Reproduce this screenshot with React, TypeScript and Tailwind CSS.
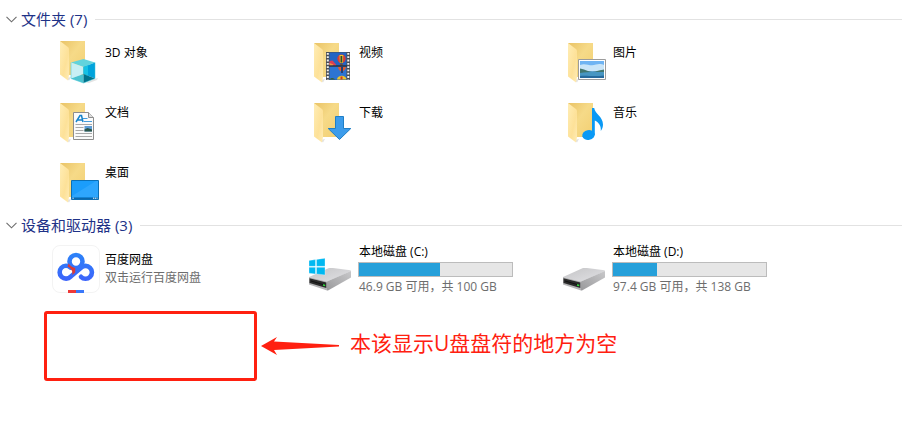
import { ReactNode, useState } from "react";

interface IFolder {
    name: string;
    icon: ReactNode;
    top?: number;
}

interface IDrive {
    name: string;
    usage: string;
    used: number;
    system?: boolean;
}

// -----ICONS-----
const FolderIcon = ({ top = 5, children }: { top?: number; children: ReactNode }) => (
    <svg viewBox="0 0 48 48" className="size-12 shrink-0" aria-hidden="true">
        <defs>
            <linearGradient id="folderBack" x1="0" y1="0" x2="1" y2="1">
                <stop offset="0" stopColor="#e9c366" />
                <stop offset="0.45" stopColor="#f6da88" />
                <stop offset="1" stopColor="#f2cf72" />
            </linearGradient>
            <linearGradient id="folderFlap" x1="0" y1="0" x2="1" y2="1">
                <stop offset="0" stopColor="#ffedb5" />
                <stop offset="0.6" stopColor="#fde198" />
                <stop offset="1" stopColor="#ffecb6" />
            </linearGradient>
        </defs>
        <g transform={`translate(0 ${top - 5})`}>
            <path d="M14 42l5-1-2 3.500z" fill="#e3e3e3" />
            <path d="M8 5h25v34H16z" fill="url(#folderBack)" />
            <path d="M8 5l8.200 6.200 .8 1.300V39l-1 5.600L8 38.500z" fill="url(#folderFlap)" />
        </g>
        {children}
    </svg>
);

const Objects3D = () => (
    <g>
        <path d="M34 45l8-4 4-1-1 2-8 3z" fill="#e4e4e4" />
        <path d="M19 24.500l12.500-3.500L43 24.500 31.500 29z" fill="#62d3dd" />
        <path d="M19 24.500L31.500 29v7L19 40.500z" fill="#c8eff4" />
        <path d="M43 24.500L31.500 29v7L43 40.500z" fill="#00a3dc" />
        <path d="M31.500 29l4.500-1.800v10.500L31.500 36z" fill="#16c1e4" />
        <path d="M19 40.500L31.500 36v9z" fill="#4cc3d0" />
        <path d="M43 40.500L31.500 36v9z" fill="#00738c" />
        <path d="M19 24.500v16L31.500 45 43 40.500v-16" fill="none" stroke="#3fc2d5" strokeWidth=".5" />
    </g>
);

const Videos = () => (
    <g>
        <path d="M20 14h24v28H20z" fill="#4b4f55" />
        <path d="M23.500 14.500h17v13h-17z" fill="#2464c4" />
        <path d="M23.500 28.500h17v13.200h-17z" fill="#2d74d2" />
        <path d="M21.800 15v27M42.300 15v27" stroke="#f2f2f2" strokeWidth="2" strokeDasharray="1.800 1.500" />
        <circle cx="35.500" cy="20.800" r="4.200" fill="#d93a36" />
        <path d="M33.500 17h3.800l-.4 8h-3z" fill="#f3c42f" />
        <path d="M34.500 18h1.800v6.500h-1.800z" fill="#284c3b" />
        <path d="M34.200 25.500h2.500v2h-2.500z" fill="#77462b" />
        <path d="M23.500 23l3-.5 3.500 4v1h-6.500z" fill="#dc3e54" />
        <path d="M23.500 25l4 1.500-1 1h-3z" fill="#ed9644" />
        <path d="M32 29h8c-.5 3-2 3.500-4 5-2-1.200-3.500-2-4-5z" fill="#e15a2e" />
        <path d="M35 29h2v6h-2z" fill="#233e72" />
        <path d="M31 41.500c.5-5 9-5 9.500 0z" fill="#eec529" />
        <path d="M34.500 38.500h2v3h-2z" fill="#c83834" />
        <path d="M23.500 41.500c1.500-2 4-2 5.500 0z" fill="#35603b" />
        <path d="M23 28h18" stroke="#1d2733" />
    </g>
);

const Pictures = () => (
    <g>
        <path d="M18.500 21.500h27v20h-27z" fill="#fff" stroke="#9c9c9c" />
        <path d="M20 23h24v17H20z" fill="#6fb4f3" />
        <path d="M20 27c6-2.500 10 2 16-.5 3-1 6-.5 8 .5v6H20z" fill="#c9e5f8" />
        <path d="M20 30.500c3 .3 5 1.700 8 2.500 4 1.200 7 .5 10-.3 3-.7 4.500-1 6-1.200v4H20z" fill="#41766f" />
        <path d="M20 35c8-1.500 16-1 24-1v6H20z" fill="#4796c2" />
        <path d="M20 38c6-1 14 1 24-.5V40H20z" fill="#276a9d" />
    </g>
);

const Documents = () => (
    <g>
        <path d="M21.500 14.500h15l5 5v22h-20z" fill="#fafafa" stroke="#8d8d8d" />
        <path d="M36.500 14.500v5h5" fill="#dedede" stroke="#8d8d8d" />
        <path d="M24 24l4-6.500h1.500L31 24M25.500 22h4.500" fill="none" stroke="#1583cb" strokeWidth="1.500" />
        <path d="M31 20.500h4.500M32 23.500h8" stroke="#459cda" />
        <path d="M23.500 26.500h16.500M23.500 29.500h8M23.500 32.500h8M23.500 35.500h16.500M23.500 38.500h16.500" stroke="#a9a9a9" />
        <path d="M32.500 28h7.500v5.500h-7.500z" fill="#5d9cd4" />
        <path d="M32.500 31.500l3-1.500 4.500 1.500v2h-7.500z" fill="#2c5548" />
    </g>
);

const Downloads = () => <path d="M29.500 18.500h8V30.500h7.300L33.500 41.500 22.200 30.500h7.300z" fill="#3c9ceb" stroke="#1f7fc6" />;

const Music = () => (
    <g fill="#0a99f5">
        <ellipse cx="28.500" cy="37" rx="6.300" ry="4.900" transform="rotate(-12 28.500 37)" />
        <path d="M32 10h2.200c.7 6 8.800 8.500 8.800 16.500 0 2.500-.8 4.500-2.200 6.500.5-5-1.800-8.500-6-10.500V37H32z" />
    </g>
);

const Desktop = () => (
    <g>
        <path d="M19.500 22.500h27v19h-27z" fill="#1b9dfb" stroke="#0b6fb5" />
        <path d="M20 38L44 23h2v16H20z" fill="#41b0ff" opacity=".5" />
        <path d="M20 39.500h26V41H20z" fill="#0a68ad" />
        <path d="M20.500 40.200h1.500M41 40.200h4.500" stroke="#fff" strokeDasharray="1.200 .6" />
    </g>
);

const NetdiskIcon = () => (
    <svg viewBox="0 0 48 48" className="size-12 shrink-0" aria-hidden="true">
        <defs>
            <linearGradient id="netdisk" x1="0" y1="8" x2="0" y2="36" gradientUnits="userSpaceOnUse">
                <stop offset="0" stopColor="#2b83f8" />
                <stop offset="1" stopColor="#3d64fb" />
            </linearGradient>
        </defs>
        <rect x=".5" y=".5" width="47" height="47" rx="7.500" fill="#fff" stroke="#f3f3f3" />
        <g fill="none" stroke="url(#netdisk)" strokeWidth="4.600" strokeLinecap="round">
            <circle cx="24" cy="16.500" r="6.500" />
            <path d="M18.500 22.600A6.400 6.400 0 1 0 18.700 31.600L29 22.800A6.400 6.400 0 1 1 29 31.800" />
        </g>
        <path d="M16.800 18.300c1 2.500 3.200 4.200 6.400 4.700v4.500l-2.900 2.500c.6-3.500-.7-6.600-4.800-8.500z" fill="#db3b37" />
        <path d="M16 45h8v3h-8z" fill="#ee3938" />
        <path d="M24 45h8v3h-8z" fill="#3a78fa" />
    </svg>
);

const DriveIcon = ({ system }: { system?: boolean }) => (
    <svg viewBox="0 0 48 48" className="size-12 shrink-0" aria-hidden="true">
        <defs>
            <linearGradient id="driveTop" x1="0" y1="0" x2="1" y2="1">
                <stop offset="0" stopColor="#c4c4c6" />
                <stop offset="1" stopColor="#e2e2e5" />
            </linearGradient>
            <linearGradient id="driveSide" x1="0" y1="1" x2="1" y2="0">
                <stop offset="0" stopColor="#9a9a9c" />
                <stop offset="1" stopColor="#c8c8ca" />
            </linearGradient>
        </defs>
        <path d="M3 31l20-9h4l17.500 2.200.5 1L21 35.500z" fill="url(#driveTop)" />
        <path d="M21 35.500L45 25v6.500L22 44.500h-1z" fill="url(#driveSide)" />
        <path d="M3 31l18 4.500v9L3 38.500z" fill="#b4b4b6" />
        <path d="M3.500 32.200l16.800 4.300V42L3.500 37z" fill="#2b2b2b" />
        <path d="M5 35l12 3.500" stroke="#111" />
        <path d="M17 38.200l2.200.6v1.500l-2.200-.5z" fill="#2fe23c" />
        {system && (
            <path d="M3 14.500l6.500-.9v6.700H3zM10.500 13.400L19 12.200v8.100h-8.500zM3 21.300h6.500V28L3 27.200zM10.500 21.300H19v7.600l-8.500-.9z" fill="#00b8f1" stroke="#fff" strokeWidth=".3" />
        )}
    </svg>
);

const folders: IFolder[] = [
    { name: "3D 对象", icon: <Objects3D />, top: 3 },
    { name: "视频", icon: <Videos /> },
    { name: "图片", icon: <Pictures /> },
    { name: "文档", icon: <Documents /> },
    { name: "下载", icon: <Downloads /> },
    { name: "音乐", icon: <Music /> },
    { name: "桌面", icon: <Desktop /> },
];

const drives: IDrive[] = [
    { name: "本地磁盘 (C:)", usage: "46.9 GB 可用，共 100 GB", used: 53, system: true },
    { name: "本地磁盘 (D:)", usage: "97.4 GB 可用，共 138 GB", used: 29 },
];

// -----SECTION-----
const Section = ({ title, children }: { title: string; children: ReactNode }) => {
    const [open, setOpen] = useState<boolean>(true);

    return (
        <section>
            <h2 className="flex h-[38px] items-center gap-2 pr-[7px] pl-1.5">
                <button type="button" aria-expanded={open} onClick={() => setOpen((prev) => !prev)} className="flex items-center gap-1 text-[15px] leading-5 text-[#1e3287]">
                    <svg viewBox="0 0 11 7" className="h-[7px] w-[11px]" aria-hidden="true">
                        <path d="M.5 .8l5 5 5-5" fill="none" stroke="#6d6d6d" strokeWidth="1.100" />
                    </svg>
                    {title}
                </button>
                <span className="h-px flex-1 bg-[#e2e2e2]" />
            </h2>
            {open && children}
        </section>
    );
};

function App() {
    return (
        <main className="bg-white font-['Open_Sans','Noto_Sans_CJK_SC',sans-serif] text-xs text-black">
            <Section title="文件夹 (7)">
                <ul className="grid grid-cols-[repeat(auto-fill,254px)] gap-y-3 pl-[52px]">
                    {folders.map(({ name, icon, top }) => (
                        <li key={name} className="flex gap-1">
                            <FolderIcon top={top}>{icon}</FolderIcon>
                            <span className="pt-1.5 pl-px leading-[18px]">{name}</span>
                        </li>
                    ))}
                </ul>
            </Section>
            <Section title="设备和驱动器 (3)">
                <ul className="grid grid-cols-[repeat(auto-fill,254px)] pl-[52px]">
                    <li className="flex h-[50px] items-center gap-1">
                        <NetdiskIcon />
                        <div className="pl-px leading-[18px]">
                            <p>百度网盘</p>
                            <p className="text-[#6d6d6d]">双击运行百度网盘</p>
                        </div>
                    </li>
                    {drives.map(({ name, usage, used, system }) => (
                        <li key={name} className="flex items-center gap-1">
                            <DriveIcon system={system} />
                            <div className="leading-4">
                                <p className="pl-px">{name}</p>
                                <div role="progressbar" aria-label={name} aria-valuenow={used} className="my-0.5 h-[15px] w-[155px] border border-[#bcbcbc] bg-[#e6e6e6]">
                                    <div className="h-full bg-[#26a0da]" style={{ width: `${used}%` }} />
                                </div>
                                <p className="pl-px text-[#6d6d6d]">{usage}</p>
                            </div>
                        </li>
                    ))}
                </ul>
            </Section>
            {/* -----NOTE----- */}
            <div className="mt-4 flex items-center pl-11 text-[#ff2010]">
                <div className="h-[70px] w-[213px] rounded-[3px] border-3 border-[#ff2010]" />
                <svg viewBox="0 0 78 18" className="ml-1 h-[18px] w-[78px]" aria-hidden="true">
                    <path d="M0 9L16 0l-3 4.500L78 8v1.500L13 13l3 5z" fill="#ff2010" />
                </svg>
                <p className="pb-1.5 pl-[11px] text-[21px] leading-7">本该显示U盘盘符的地方为空</p>
            </div>
        </main>
    );
}

export default App;
